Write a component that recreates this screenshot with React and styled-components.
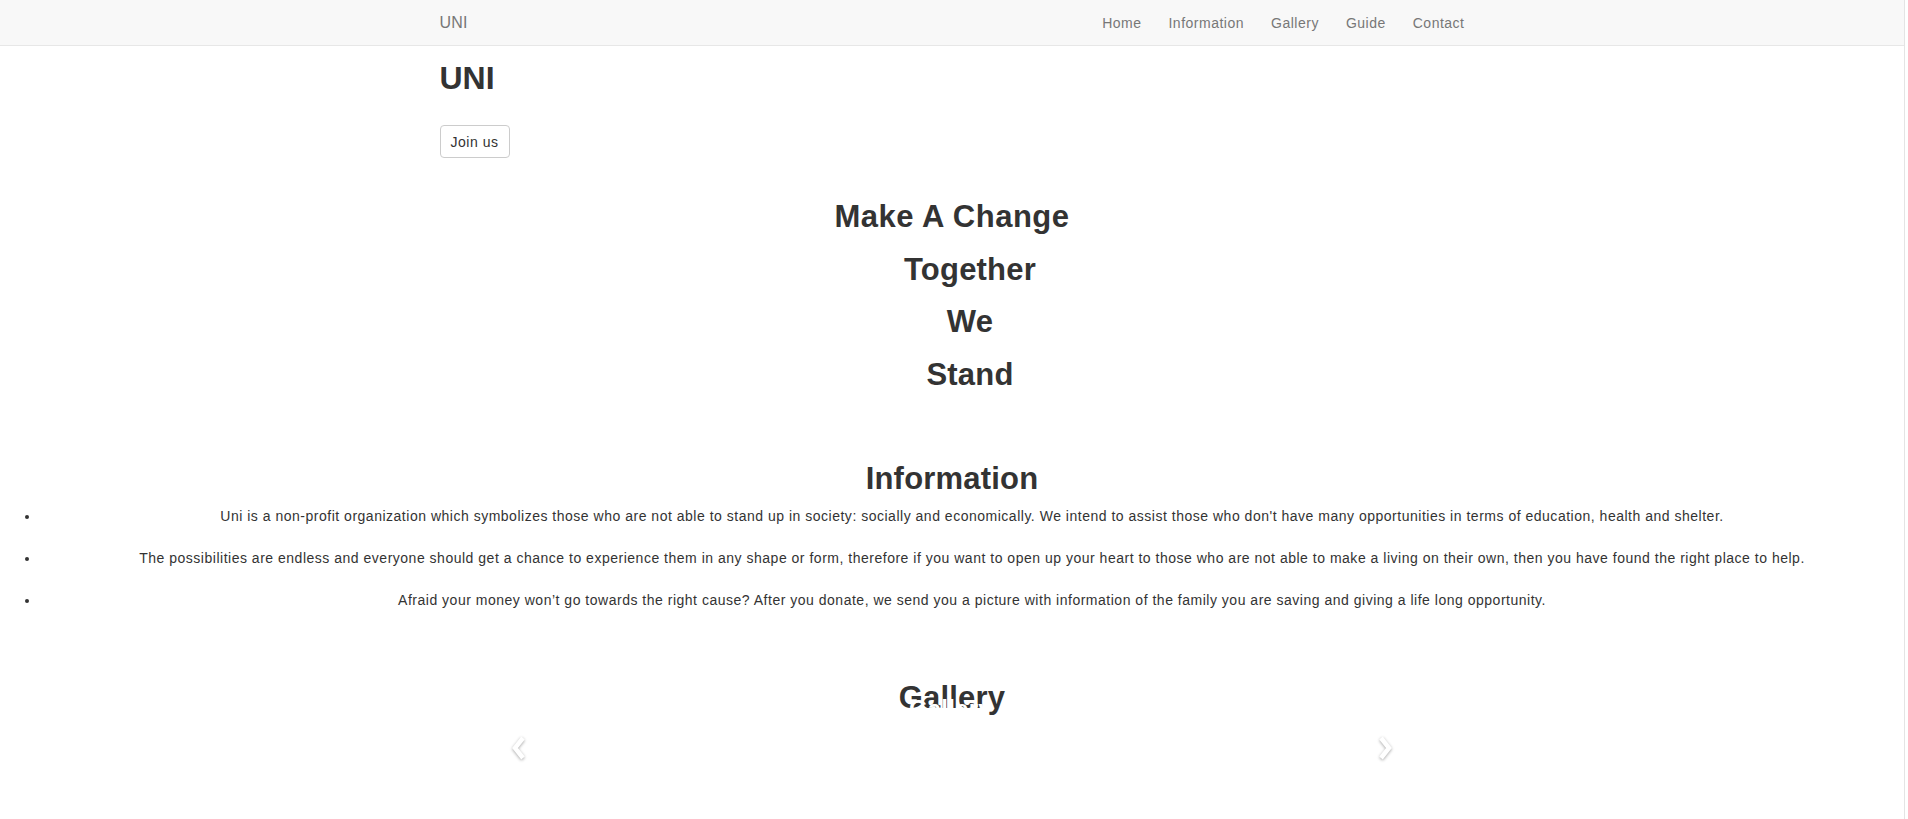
import React from 'react';
import styled, { createGlobalStyle } from 'styled-components';

const GlobalStyle = createGlobalStyle`
  html, body {
    margin: 0;
    padding: 0;
    background: #fff;
  }
  body {
    font-family: "Liberation Sans", Arial, sans-serif;
    font-size: 14px;
    line-height: 20px;
    color: #333;
  }
  * { box-sizing: border-box; }
`;

const Page = styled.div`
  width: 1905px;
  min-height: 819px;
  border-right: 1px solid #e4e4e4;
`;

const Navbar = styled.nav`
  height: 46px;
  background: #f8f8f8;
  border-bottom: 1px solid #e7e7e7;
`;

const NavInner = styled.div`
  width: 1025px;
  height: 100%;
  margin: 0 auto;
  display: flex;
  align-items: center;
  justify-content: space-between;
`;

const Brand = styled.a`
  font-size: 16px;
  color: #777;
  text-decoration: none;
  letter-spacing: 0.2px;
`;

const NavLinks = styled.ul`
  display: flex;
  gap: 27px;
  list-style: none;
  margin: 0;
  padding: 0;
`;

const NavLink = styled.a`
  font-size: 14px;
  color: #777;
  text-decoration: none;
  letter-spacing: 0.5px;
`;

const Container = styled.div`
  width: 1025px;
  margin: 0 auto;
`;

const Title = styled.h1`
  font-size: 32px;
  line-height: 35px;
  font-weight: 700;
  margin: 15px 0 29px;
  color: #333;
`;

const JoinButton = styled.button`
  display: block;
  width: 70px;
  height: 33px;
  padding: 0;
  background: #fff;
  border: 1px solid #ccc;
  border-radius: 4px;
  font-family: inherit;
  font-size: 14px;
  letter-spacing: 0.5px;
  color: #333;
`;

const Hero = styled.div`
  margin-top: 42px;
  display: flex;
  flex-direction: column;
  gap: 18.5px;
`;

const Heading = styled.h2`
  font-size: 31px;
  line-height: 34px;
  font-weight: 700;
  letter-spacing: ${p => (p.$wide ? '0.5px' : '0.2px')};
  color: #333;
  text-align: center;
  margin: 0;
  padding-left: ${p => (p.$indent ? '36px' : '0')};
  position: relative;
`;

const Section = styled.section`
  margin-top: ${p => p.$top}px;
`;

const InfoList = styled.ul`
  margin: 10px 0 0;
  padding-left: 40px;
  list-style: disc;
`;

const InfoItem = styled.li`
  text-align: center;
  font-size: 14px;
  line-height: 20px;
  letter-spacing: 0.51px;
  margin-bottom: 22px;
`;

const GhostCaption = styled.span`
  position: absolute;
  left: 50%;
  top: 16px;
  transform: translateX(-52%);
  font-size: 24px;
  line-height: 24px;
  color: #fff;
  white-space: nowrap;
`;

const Carousel = styled.div`
  position: relative;
  margin-top: 10px;
  height: 46px;
`;

const Control = styled.a`
  position: absolute;
  top: 0;
  bottom: 0;
  width: 15%;
  ${p => (p.$side === 'left' ? 'left: 0; padding-left: 6px;' : 'right: 0; padding-right: 6px;')}
  display: flex;
  align-items: center;
  justify-content: center;
  svg {
    filter: drop-shadow(0 1px 1.5px rgba(0, 0, 0, 0.35));
  }
`;

const Chevron = ({ dir }) => (
  <svg width="20" height="26" viewBox="0 0 20 26">
    <polyline
      points={dir === 'left' ? '14,3 6,13 14,23' : '6,3 14,13 6,23'}
      fill="none"
      stroke="#fff"
      strokeWidth="4.5"
      strokeLinejoin="miter"
    />
  </svg>
);

const info = [
  "Uni is a non-profit organization which symbolizes those who are not able to stand up in society: socially and economically. We intend to assist those who don't have many opportunities in terms of education, health and shelter.",
  'The possibilities are endless and everyone should get a chance to experience them in any shape or form, therefore if you want to open up your heart to those who are not able to make a living on their own, then you have found the right place to help.',
  "Afraid your money won\u2019t go towards the right cause? After you donate, we send you a picture with information of the family you are saving and giving a life long opportunity.",
];

const links = ['Home', 'Information', 'Gallery', 'Guide', 'Contact'];

export default function App() {
  return (
    <Page>
      <GlobalStyle />
      <Navbar>
        <NavInner>
          <Brand href="#">UNI</Brand>
          <NavLinks>
            {links.map(l => (
              <li key={l}>
                <NavLink href="#">{l}</NavLink>
              </li>
            ))}
          </NavLinks>
        </NavInner>
      </Navbar>

      <Container>
        <Title>UNI</Title>
        <JoinButton>Join us</JoinButton>
        <Hero>
          <Heading $wide>Make A Change</Heading>
          <Heading $indent>Together</Heading>
          <Heading $indent>We</Heading>
          <Heading $indent>Stand</Heading>
        </Hero>
        <Section $top={70}>
          <Heading>Information</Heading>
        </Section>
      </Container>

      <InfoList>
        {info.map((t, i) => (
          <InfoItem key={i}>{t}</InfoItem>
        ))}
      </InfoList>

      <Container>
        <Section $top={71}>
          <Heading>
            Gallery
            <GhostCaption>Gallery</GhostCaption>
          </Heading>
          <Carousel>
            <Control $side="left" href="#"><Chevron dir="left" /></Control>
            <Control $side="right" href="#"><Chevron dir="right" /></Control>
          </Carousel>
        </Section>
      </Container>
    </Page>
  );
}
